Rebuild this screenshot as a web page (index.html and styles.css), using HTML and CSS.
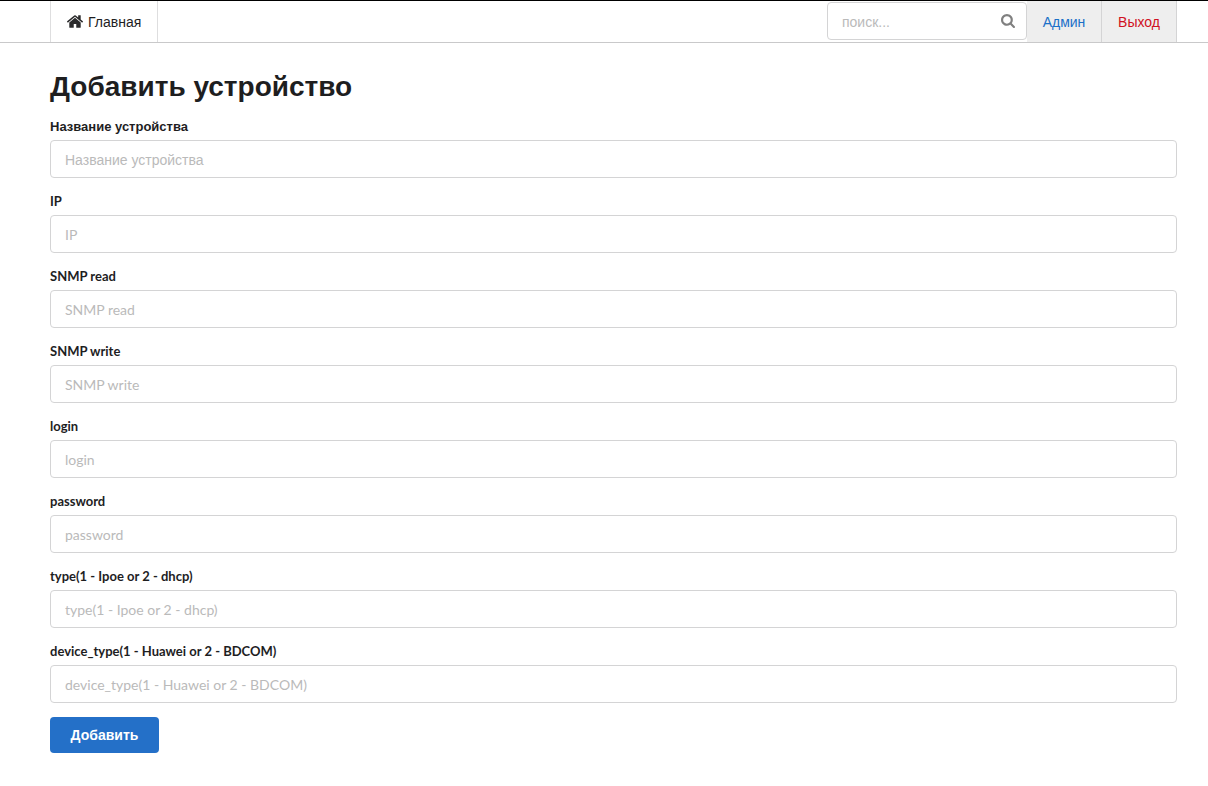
FILE: index.html
```html
<!DOCTYPE html>
<html lang="ru">
<head>
<meta charset="utf-8">
<title>Добавить устройство</title>
<link rel="stylesheet" href="styles.css">
</head>
<body>
<nav class="menu">
  <a class="item home" href="#"><svg class="home-icon" viewBox="89 253 1614 1283" aria-hidden="true"><path d="M1472 992v480q0 26-19 45t-45 19h-384v-384h-256v384h-384q-26 0-45-19t-19-45v-480q0-1 .5-3t.5-3l575-474 575 474q1 2 1 6zm223-69l-62 74q-8 9-21 11h-3q-13 0-21-7l-692-577-692 577q-12 8-24 7-13-2-21-11l-62-74q-8-10-7-23.5t11-21.5l719-599q32-26 76-26t76 26l244 204v-195q0-14 9-23t23-9h192q14 0 23 9t9 23v408l219 182q10 8 11 21.5t-7 23.5z"/></svg>Главная</a>
  <form class="search">
    <input type="text" placeholder="поиск..." aria-label="поиск">
    <svg class="search-icon" viewBox="64 128 1664 1664" aria-hidden="true"><path d="M1216 832q0-185-131.5-316.5t-316.5-131.5-316.5 131.5-131.5 316.5 131.5 316.5 316.5 131.5 316.5-131.5 131.5-316.5zm512 832q0 52-38 90t-90 38q-54 0-90-38l-343-342q-179 124-399 124-143 0-273.5-55.5t-225-150-150-225-55.5-273.5 55.5-273.5 150-225 225-150 273.5-55.5 273.5 55.5 225 150 150 225 55.5 273.5q0 220-124 399l343 343q37 37 37 90z"/></svg>
  </form>
  <a class="item account admin" href="#">Админ</a>
  <a class="item account logout" href="#">Выход</a>
</nav>
<main class="content">
  <h1 class="title">Добавить устройство</h1>
  <form class="form">
    <div class="field cyrillic"><label for="name">Название устройства</label><input id="name" type="text" placeholder="Название устройства"></div>
    <div class="field"><label for="ip">IP</label><input id="ip" type="text" placeholder="IP"></div>
    <div class="field"><label for="snmp-read">SNMP read</label><input id="snmp-read" type="text" placeholder="SNMP read"></div>
    <div class="field"><label for="snmp-write">SNMP write</label><input id="snmp-write" type="text" placeholder="SNMP write"></div>
    <div class="field"><label for="login">login</label><input id="login" type="text" placeholder="login"></div>
    <div class="field"><label for="password">password</label><input id="password" type="text" placeholder="password"></div>
    <div class="field"><label for="type">type(1 - Ipoe or 2 - dhcp)</label><input id="type" type="text" placeholder="type(1 - Ipoe or 2 - dhcp)"></div>
    <div class="field"><label for="device-type">device_type(1 - Huawei or 2 - BDCOM)</label><input id="device-type" type="text" placeholder="device_type(1 - Huawei or 2 - BDCOM)"></div>
    <button class="submit" type="submit">Добавить</button>
  </form>
</main>
</body>
</html>
```
FILE: styles.css
```css
* {
  box-sizing: border-box;
}

body {
  margin: 0;
  background: #fff;
  color: #1e1e1f;
  font: 14px/20px "Liberation Sans", Arial, sans-serif;
}

.menu {
  display: flex;
  min-height: 43px;
  padding: 0 31px 0 50px;
  border-top: 1px solid #000;
  border-bottom: 1px solid #c9c9ca;
}

.item {
  display: flex;
  align-items: center;
  padding: 0 16px;
  border-right: 1px solid #d4d4d5;
  color: #1e1e1f;
  text-decoration: none;
}

.home {
  gap: 5px;
  border-color: #dededf;
  border-left: 1px solid #dededf;
}

.home-icon {
  width: 16px;
  height: 13px;
  fill: #2b2b2c;
}

.search {
  position: relative;
  width: 200px;
  margin-left: auto;
  padding-top: 1px;
}

input {
  display: block;
  width: 100%;
  height: 38px;
  padding: 0 14px;
  border: 1px solid #d4d4d5;
  border-radius: 4px;
  background: #fff;
  color: #1e1e1f;
  font: inherit;
}

.search input,
.cyrillic input {
  padding-top: 2px;
}

input::placeholder {
  color: #bababa;
  opacity: 1;
}

.search-icon {
  position: absolute;
  top: 13px;
  right: 12px;
  width: 14px;
  height: 14px;
  fill: #808080;
}

.account {
  justify-content: center;
  min-width: 75px;
  padding: 0 15px;
  background: #eee;
}

.admin {
  color: #1b70c8;
}

.logout {
  color: #d01022;
}

.content {
  padding: 26px 31px 30px 50px;
}

.title {
  margin: 0 0 12px;
  font-size: 28px;
  line-height: 36px;
}

.field {
  margin-bottom: 14px;
  font-family: Lato, sans-serif;
}

.field label {
  display: block;
  margin-bottom: 4px;
  font-size: 13px;
  font-weight: 700;
  line-height: 19px;
}

.field.cyrillic {
  font-family: "Liberation Sans", Arial, sans-serif;
}

.submit {
  min-width: 109px;
  height: 36px;
  padding: 0 20px;
  border: 0;
  border-radius: 4px;
  background: #2470c8;
  color: #fff;
  font: inherit;
  font-weight: 700;
}
```
